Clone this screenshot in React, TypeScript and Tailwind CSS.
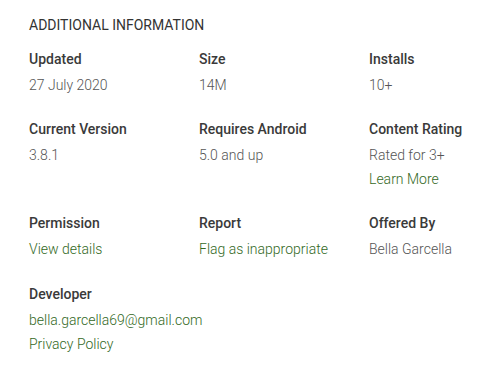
const rows: { label: string; values: { text: string; link?: boolean }[] }[][] = [
  [
    { label: "Updated", values: [{ text: "27 July 2020" }] },
    { label: "Size", values: [{ text: "14M" }] },
    { label: "Installs", values: [{ text: "10+" }] },
  ],
  [
    { label: "Current Version", values: [{ text: "3.8.1" }] },
    { label: "Requires Android", values: [{ text: "5.0 and up" }] },
    {
      label: "Content Rating",
      values: [{ text: "Rated for 3+" }, { text: "Learn More", link: true }],
    },
  ],
  [
    { label: "Permission", values: [{ text: "View details", link: true }] },
    { label: "Report", values: [{ text: "Flag as inappropriate", link: true }] },
    { label: "Offered By", values: [{ text: "Bella Garcella" }] },
  ],
  [
    {
      label: "Developer",
      values: [
        { text: "bella.garcella69@gmail.com", link: true },
        { text: "Privacy Policy", link: true },
      ],
    },
  ],
];

export default function App() {
  return (
    <div className="min-h-screen bg-white pl-[29px] pt-[15px] font-['Roboto',sans-serif] text-[14px]">
      <h2 className="text-[14px] leading-[20px] text-[#333] uppercase mb-[12px]">
        Additional Information
      </h2>

      <div className="flex flex-col gap-[20px]">
        {rows.map((row, i) => (
          <div
            key={i}
            className={
              i === rows.length - 1
                ? "grid grid-cols-[170px_170px_1fr] mt-[1px]"
                : "grid grid-cols-[170px_170px_1fr]"
            }
          >
            {row.map((item) => (
              <div key={item.label}>
                <div className="font-medium leading-[24px] text-[#3a3a3a] mb-[2px]">
                  {item.label}
                </div>
                {item.values.map((v) => (
                  <div
                    key={v.text}
                    className={
                      v.link
                        ? "font-light leading-[24px] text-[#33691e]"
                        : "font-light leading-[24px] text-[#555]"
                    }
                  >
                    {v.text}
                  </div>
                ))}
              </div>
            ))}
          </div>
        ))}
      </div>
    </div>
  );
}
